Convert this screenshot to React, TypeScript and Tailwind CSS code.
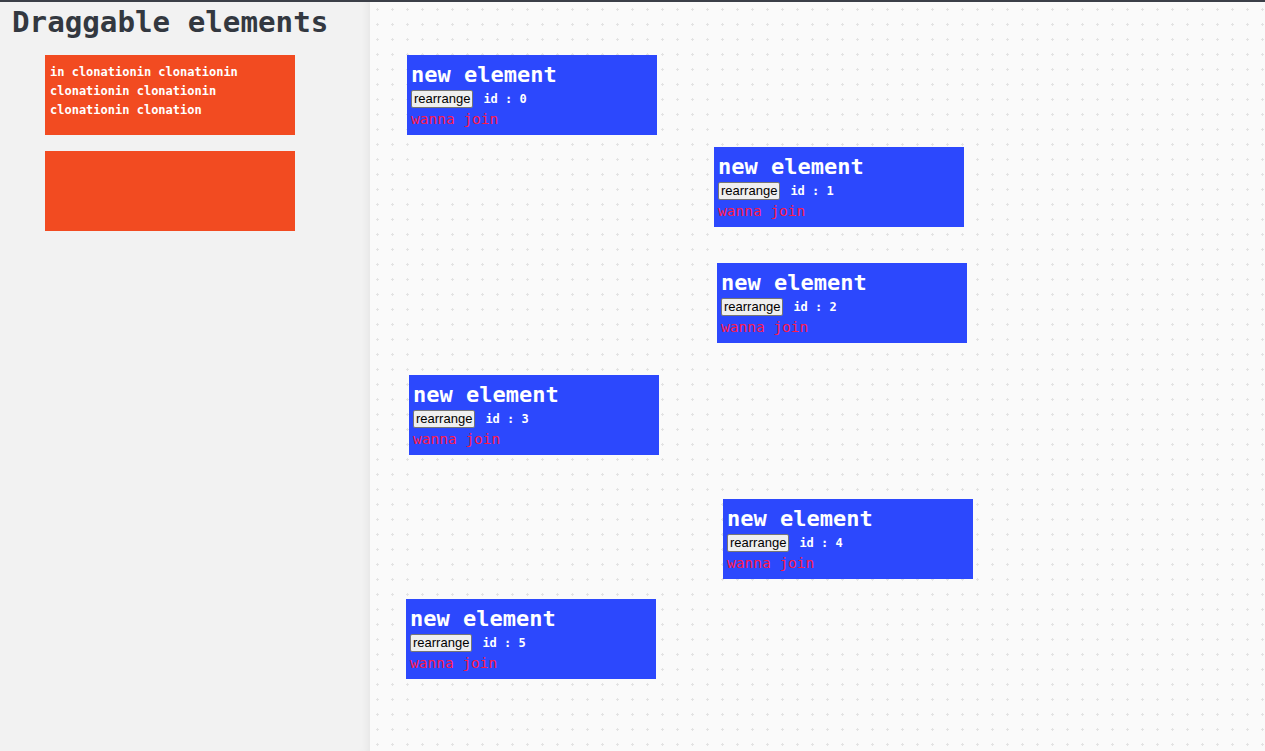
const mono = "font-['DejaVu_Sans_Mono','Liberation_Mono',monospace]";

const elements = [
  { id: 0, x: 37, y: 53 },
  { id: 1, x: 344, y: 145 },
  { id: 2, x: 347, y: 261 },
  { id: 3, x: 39, y: 373 },
  { id: 4, x: 353, y: 497 },
  { id: 5, x: 36, y: 597 },
];

function Card({ id, x, y }: { id: number; x: number; y: number }) {
  return (
    <div
      className={`absolute w-[250px] h-[80px] bg-[#2c48fd] pl-[4px] pr-[5px] pt-[6px] ${mono}`}
      style={{ left: x, top: y }}
    >
      <div className="text-[22px] leading-[28px] font-bold text-white">new element</div>
      <div className="flex items-center gap-[10px] mt-[1px]">
        <button className="h-[18px] px-[2px] bg-[#efefef] border border-[#767676] rounded-[2px] text-[13px] leading-[14px] text-black font-['Liberation_Sans',Arial,sans-serif]">
          rearrange
        </button>
        <span className="text-[12px] font-bold text-white">id : {id}</span>
      </div>
      <div className="text-[14.5px] leading-[20px] mt-[1px] text-[#ff1a4a]">wanna join</div>
    </div>
  );
}

export default function App() {
  return (
    <div className="flex h-screen w-full overflow-hidden border-t-2 border-[#3b3f48]">
      <aside className="w-[370px] shrink-0 bg-[#f2f2f2] shadow-[inset_-8px_0_8px_-6px_rgba(0,0,0,0.06)] z-10">
        <h1 className={`ml-[12px] mt-[2px] text-[29.2px] leading-[36px] font-bold text-[#333840] ${mono}`}>
          Draggable elements
        </h1>
        <div className="ml-[45px] mt-[15px] flex flex-col gap-[16px]">
          <div className={`w-[250px] h-[80px] bg-[#f24b21] px-[5px] pt-[8px] text-[12px] leading-[19px] font-bold text-white ${mono}`}>
            in clonationin clonationin clonationin clonationin clonationin clonation
          </div>
          <div className="w-[250px] h-[80px] bg-[#f24b21]" />
        </div>
      </aside>
      <main className="relative flex-1 bg-[#fafafa]">
        <svg className="absolute inset-0 h-full w-full" aria-hidden="true" shapeRendering="crispEdges">
          <defs>
            <pattern id="plus" x="0" y="0" width="15" height="15" patternUnits="userSpaceOnUse">
              <rect x="6" y="7" width="3" height="1" fill="#e3e3e3" />
              <rect x="7" y="6" width="1" height="3" fill="#e3e3e3" />
            </pattern>
          </defs>
          <rect width="100%" height="100%" fill="url(#plus)" />
        </svg>
        {elements.map((e) => (
          <Card key={e.id} {...e} />
        ))}
      </main>
    </div>
  );
}
